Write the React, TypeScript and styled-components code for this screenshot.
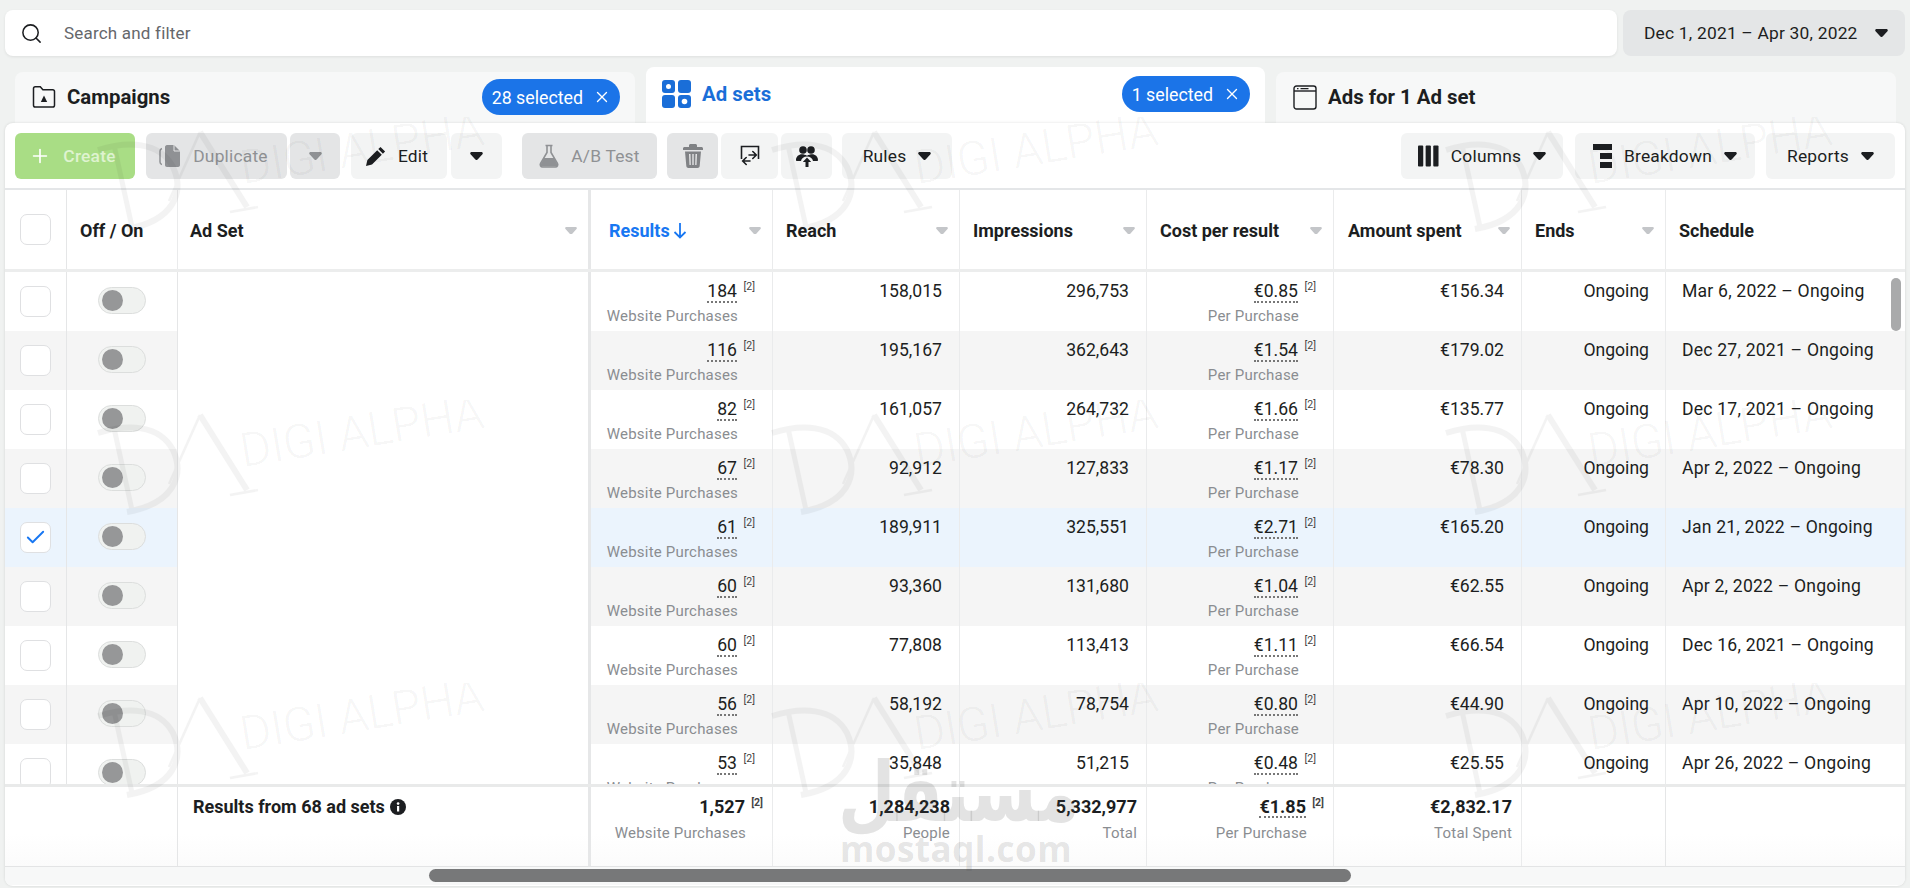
import * as React from "react";
import styled, { createGlobalStyle } from "styled-components";
import { Search, X, Plus, Check } from "lucide-react";

const GRID = "62px 111px 413px 182px 187px 187px 187px 188px 144px 240px";

const rows = [
  ["184", "158,015", "296,753", "€0.85", "€156.34", "Mar 6, 2022 – Ongoing"],
  ["116", "195,167", "362,643", "€1.54", "€179.02", "Dec 27, 2021 – Ongoing"],
  ["82", "161,057", "264,732", "€1.66", "€135.77", "Dec 17, 2021 – Ongoing"],
  ["67", "92,912", "127,833", "€1.17", "€78.30", "Apr 2, 2022 – Ongoing"],
  ["61", "189,911", "325,551", "€2.71", "€165.20", "Jan 21, 2022 – Ongoing"],
  ["60", "93,360", "131,680", "€1.04", "€62.55", "Apr 2, 2022 – Ongoing"],
  ["60", "77,808", "113,413", "€1.11", "€66.54", "Dec 16, 2021 – Ongoing"],
  ["56", "58,192", "78,754", "€0.80", "€44.90", "Apr 10, 2022 – Ongoing"],
  ["53", "35,848", "51,215", "€0.48", "€25.55", "Apr 26, 2022 – Ongoing"],
];

const Global = createGlobalStyle`
  html, body { margin: 0; padding: 0; background: #f0f2f1; }
  body { font-family: Roboto, "Liberation Sans", sans-serif; color: #1c1e21; }
  * { box-sizing: border-box; }
`;

const Page = styled.div`
  position: relative;
  width: 1910px;
  height: 888px;
  padding: 10px 5px 2px 5px;
  overflow: hidden;
  background: #f0f2f1;
`;

const TopBar = styled.div`
  display: flex;
  gap: 6px;
  height: 46px;
`;

const SearchBox = styled.div`
  flex: 1;
  display: flex;
  align-items: center;
  gap: 21px;
  padding-left: 15px;
  background: #fff;
  border-radius: 8px;
  box-shadow: 0 1px 3px rgba(0, 0, 0, 0.08);
  font-size: 17px;
  letter-spacing: 0.2px;
  color: #65676b;
`;

const DateButton = styled.div`
  width: 282px;
  display: flex;
  align-items: center;
  justify-content: space-between;
  padding: 0 17px 0 21px;
  background: #e4e6e7;
  border-radius: 8px;
  font-size: 17.4px;
  letter-spacing: 0.2px;
`;

const TabRow = styled.div`
  display: flex;
  gap: 11px;
  height: 56px;
  margin-top: 11px;
  padding-left: 10px;
`;

const Tab = styled.div<{ $active?: boolean }>`
  width: ${(p) => (p.$active ? 619 : 620)}px;
  height: ${(p) => (p.$active ? 56 : 51)}px;
  margin-top: ${(p) => (p.$active ? 0 : 5)}px;
  display: flex;
  align-items: flex-start;
  padding: ${(p) => (p.$active ? "9px 15px 0 16px" : "7px 15px 0 17px")};
  background: ${(p) => (p.$active ? "#fff" : "#f7f8f8")};
  border-radius: 8px 8px 0 0;
`;

const TabLabel = styled.div<{ $active?: boolean }>`
  flex: 1;
  height: 36px;
  display: flex;
  align-items: center;
  gap: 11px;
  font-size: 20.4px;
  font-weight: 700;
  color: ${(p) => (p.$active ? "#1a6ed8" : "#1c1e21")};
`;

const Chip = styled.div`
  height: 36px;
  display: flex;
  align-items: center;
  gap: 10px;
  padding: 0 9px 0 10px;
  border-radius: 18px;
  background: #1b74e8;
  color: #fff;
  font-size: 17.8px;
`;

const Panel = styled.div`
  position: relative;
  height: 763px;
  background: #fff;
  border-radius: 8px;
  box-shadow: 0 0 3px rgba(0, 0, 0, 0.12);
  overflow: hidden;
`;

const Toolbar = styled.div`
  display: flex;
  height: 67px;
  padding: 10px 10px 0;
  border-bottom: 2px solid #e4e6e8;
`;

const Tool = styled.div<{ $w: number; $gap?: number; $tone?: "green" | "off" | "soft"; $nudge?: number }>`
  width: ${(p) => p.$w}px;
  height: 46px;
  margin-right: ${(p) => p.$gap ?? 3}px;
  padding-right: ${(p) => p.$nudge ?? 0}px;
  display: flex;
  align-items: center;
  justify-content: center;
  gap: 12px;
  font-size: 17.4px;
  letter-spacing: 0.2px;
  border-radius: 6px;
  background: ${(p) => (p.$tone === "green" ? "#a9dd85" : p.$tone === "off" ? "#e4e5e6" : "#f3f4f4")};
  color: ${(p) => (p.$tone === "green" ? "#dff3d0" : p.$tone === "off" ? "#8f9194" : "#1c1e21")};
  font-weight: ${(p) => (p.$tone === "green" ? 500 : 400)};
`;

const ToolSpacer = styled.div`
  flex: 1;
`;

const TableRow = styled.div<{ $tint?: string }>`
  display: grid;
  grid-template-columns: ${GRID};
  background: ${(p) => p.$tint ?? "#fff"};
`;

const HeadRow = styled(TableRow)`
  height: 82px;
  border-bottom: 3px solid #eceded;
`;

const HeadCell = styled.div<{ $pad?: number; $blue?: boolean; $strong?: boolean }>`
  display: flex;
  align-items: center;
  gap: 3px;
  padding-left: ${(p) => p.$pad ?? 13}px;
  padding-top: 2px;
  font-size: 18px;
  font-weight: 700;
  color: ${(p) => (p.$blue ? "#1877f2" : "#1c1e21")};
  border-right: ${(p) => (p.$strong ? "3px solid #e6e7e8" : "1px solid #eaebec")};
`;

const HeadCaret = styled.span<{ $end?: number }>`
  margin-left: auto;
  margin-right: ${(p) => p.$end ?? 11}px;
  display: flex;
`;

const Body = styled.div`
  height: 512px;
  overflow: hidden;
`;

const DataRow = styled(TableRow)`
  height: 59px;
`;

const BoxCell = styled.div`
  display: flex;
  align-items: center;
  justify-content: center;
  border-right: 1px solid #e5e6e7;
`;

const NameCell = styled.div`
  background: #fff;
  border-right: 3px solid #e6e7e8;
`;

const NumCell = styled.div<{ $pad?: number }>`
  padding: 7px ${(p) => p.$pad ?? 17}px 0 0;
  text-align: right;
  border-right: 1px solid #eaebec;
  font-size: 17.6px;
  line-height: 24px;
  white-space: nowrap;
`;

const TextCell = styled(NumCell)`
  padding-left: 16px;
  text-align: left;
  letter-spacing: 0.2px;
`;

const Metric = styled.span`
  border-bottom: 2px dotted #777;
  line-height: 19px;
  display: inline-block;
`;

const Sup = styled.sup`
  display: inline-block;
  width: 18px;
  font-size: 10.5px;
  line-height: 10px;
  text-align: right;
  vertical-align: 7px;
  color: #444;
`;

const SubLabel = styled.div<{ $pad?: number }>`
  margin-top: 3px;
  padding-right: ${(p) => p.$pad ?? 17}px;
  font-size: 15px;
  line-height: 20px;
  letter-spacing: 0.2px;
  color: #8a8d91;
`;

const CheckBox = styled.div`
  width: 31px;
  height: 31px;
  display: flex;
  align-items: center;
  justify-content: center;
  background: #fff;
  border: 1px solid #dfe0e2;
  border-radius: 7px;
`;

const Toggle = styled.div`
  width: 48px;
  height: 27px;
  margin-bottom: 2px;
  padding: 2px 0 0 3px;
  background: #f0f2f0;
  border: 1px solid #dcdedd;
  border-radius: 14px;
`;

const Knob = styled.div`
  width: 21px;
  height: 21px;
  border-radius: 50%;
  background: #969798;
`;

const FootRow = styled(TableRow)`
  height: 82px;
  border-top: 3px solid #e9eaea;
  background: linear-gradient(#fff 60%, #fbfbfb);
`;

const FootLead = styled.div`
  grid-column: span 2;
  border-right: 1px solid #e5e6e7;
`;

const FootBlank = styled.div`
  border-right: 1px solid #e5e6e7;
`;

const FootName = styled.div`
  display: flex;
  gap: 5px;
  padding: 8px 0 0 15px;
  font-size: 18px;
  line-height: 24px;
  font-weight: 700;
  border-right: 3px solid #e6e7e8;
`;

const FootNum = styled(NumCell)`
  padding-top: 8px;
  font-size: 18px;
  font-weight: 700;
`;

const FootSub = styled(SubLabel)`
  margin-top: 4px;
  font-weight: 400;
  font-size: 15px;
`;

const ScrollTrack = styled.div`
  height: 19px;
  padding: 2px 0 0 424px;
  border-top: 1px solid #e3e4e5;
  background: #f7f8f8;
`;

const ScrollThumb = styled.div`
  width: 922px;
  height: 13px;
  border-radius: 7px;
  background: #777879;
`;

const VScroll = styled.div`
  position: absolute;
  left: 1886px;
  top: 155px;
  width: 10px;
  height: 53px;
  border-radius: 5px;
  background: #a9aaab;
`;

const Marks = styled.div`
  position: absolute;
  inset: 0;
  display: grid;
  grid-template-columns: repeat(3, 674px);
  grid-auto-rows: 283px;
  padding: 117px 0 0 97px;
  pointer-events: none;
`;

const Brand = styled.div`
  position: absolute;
  left: 838px;
  top: 752px;
  width: 236px;
  text-align: center;
  color: rgba(70, 70, 70, 0.15);
  pointer-events: none;
  font-weight: 700;
`;

const BrandAr = styled.div`
  font-family: "DejaVu Sans", sans-serif;
  font-size: 66px;
  line-height: 82px;
  white-space: nowrap;
  transform: scaleY(1.25);
`;

const BrandEn = styled.div`
  font-family: "Open Sans", Roboto, sans-serif;
  font-size: 35px;
  line-height: 30px;
  letter-spacing: 0.5px;
`;

const Caret = ({ color = "#1c1e21", w = 13 }: { color?: string; w?: number }) => (
  <svg width={w} height={w * 0.62} viewBox="0 0 16 10">
    <path d="M2 0h12c1.6 0 2.4 1.6 1.4 2.8L9.4 9.3c-.8.9-2 .9-2.8 0L.6 2.8C-.4 1.6.4 0 2 0z" fill={color} />
  </svg>
);

const CampaignIcon = () => (
  <svg width="24" height="24" viewBox="0 0 24 24" fill="none" stroke="#1c1e21" strokeWidth="1.5">
    <path d="M1.5 3.5c0-1 .8-1.8 1.8-1.8h5l2.6 3h9.8c1 0 1.8.8 1.8 1.8v13.7c0 1-.8 1.8-1.8 1.800H3.300c-1 0-1.800-.8-1.800-1.800z" />
    <path d="M12 10.500l3.200 6.500H8.800z" fill="#1c1e21" stroke="none" />
  </svg>
);

const AdSetIcon = () => (
  <svg width="29" height="28" viewBox="0 0 29 28">
    <g fill="#1a6ed8">
      <rect x="0" y="0" width="13" height="13" rx="3" />
      <rect x="16" y="0" width="13" height="13" rx="3" />
      <rect x="0" y="15" width="13" height="13" rx="3" />
      <rect x="16" y="15" width="13" height="13" rx="3" />
    </g>
    <circle cx="6.500" cy="6.500" r="2.500" fill="#fff" />
    <circle cx="22.500" cy="21.500" r="2.800" fill="#fff" />
  </svg>
);

const WindowIcon = () => (
  <svg width="24" height="25" viewBox="0 0 24 25" fill="none" stroke="#1c1e21" strokeWidth="1.4">
    <rect x="1" y="1" width="22" height="23" rx="2.500" />
    <path d="M1 6h22" />
    <path d="M4 3.600h1.500M7.500 3.600h8" strokeWidth="1.200" />
  </svg>
);

const CopyIcon = () => (
  <svg width="22" height="24" viewBox="0 0 22 24" fill="#8f9194">
    <path d="M8 1h7l6 6v14c0 1-.8 2-2 2H8c-1.200 0-2-1-2-2V3c0-1 .8-2 2-2z" />
    <path d="M3 4.500C1.500 5 1 6 1 7v11c0 1.200.5 2.200 2 2.500" fill="none" stroke="#8f9194" strokeWidth="1.500" />
    <path d="M15 1v6h6" fill="none" stroke="#e4e5e6" strokeWidth="1" />
  </svg>
);

const PencilIcon = () => (
  <svg width="20" height="20" viewBox="0 0 20 20" fill="#1c1e21">
    <path d="M14.500.9l4.600 4.600-2.200 2.200-4.600-4.600zM11.200 4.200l4.600 4.600L6 18.600 0 20l1.400-6z" />
  </svg>
);

const FlaskIcon = () => (
  <svg width="20" height="24" viewBox="0 0 20 24" fill="none">
    <path d="M6.500 1.500h7M8 1.500v7L1.600 19.400C.7 21 1.700 23 3.600 23h12.800c1.900 0 2.900-2 2-3.600L12 8.500v-7" stroke="#8f9194" strokeWidth="1.600" />
    <path d="M4.800 14h10.400l3 6c.6 1.400-.2 2.600-1.600 2.600H3.400c-1.400 0-2.200-1.200-1.600-2.600z" fill="#8f9194" />
  </svg>
);

const TrashIcon = () => (
  <svg width="20" height="24" viewBox="0 0 20 24" fill="#808285">
    <path d="M7.500 0h5c.8 0 1.500.7 1.500 1.500V3h4.500c.8 0 1.500.7 1.500 1.500V6H0V4.500C0 3.700.7 3 1.500 3H6V1.500C6 .7 6.700 0 7.500 0z" />
    <path d="M2 7.500h16L16.700 22c-.1 1.100-1 2-2.200 2H5.500c-1.200 0-2.100-.9-2.200-2zM6 10l.5 11h1.300l-.3-11zM9.300 10v11h1.400V10zm3.200 0l-.3 11h1.300l.5-11z" fillRule="evenodd" />
  </svg>
);

const SwapIcon = () => (
  <svg width="22" height="22" viewBox="0 0 22 22" fill="none" stroke="#1c1e21" strokeWidth="1.600">
    <path d="M2.500 14V1.500h17V14" />
    <path d="M12 9h7m-3.200-3.500L19.300 9l-3.500 3.500" transform="translate(-2 1)" strokeLinecap="round" />
    <path d="M11 16H4m3.200-3.500L3.700 16l3.500 3.500" strokeLinecap="round" />
  </svg>
);

const PeopleIcon = () => (
  <svg width="22" height="21" viewBox="0 0 22 21" fill="#1c1e21">
    <circle cx="7" cy="4" r="3.800" />
    <circle cx="15" cy="4" r="3.800" />
    <path d="M0 14c0-3.500 2.800-5.800 6-5.800 1.600 0 3.200.5 5 1.500 1.800-1 3.400-1.500 5-1.500 3.200 0 6 2.300 6 5.800 0 .6-.4 1-1 1h-4c-.6-2.800-3-4.500-6-4.500s-5.400 1.700-6 4.500H1c-.6 0-1-.4-1-1z" />
    <path d="M11 11.500l4.200 4.500h-2.700v5h-3v-5H6.800z" />
  </svg>
);

const ColumnsIcon = () => (
  <svg width="21" height="22" viewBox="0 0 22 22" fill="#1c1e21">
    <rect x="0" y="0" width="5.500" height="22" rx="1" />
    <rect x="8" y="0" width="5.500" height="22" rx="1" />
    <rect x="16" y="0" width="5.500" height="22" rx="1" />
  </svg>
);

const BreakdownIcon = () => (
  <svg width="19" height="24" viewBox="0 0 19 24" fill="#1c1e21">
    <rect x="0" y="0" width="19" height="6" />
    <rect x="7" y="9" width="12" height="6" />
    <rect x="7" y="18" width="12" height="6" />
  </svg>
);

const InfoIcon = () => (
  <svg width="16" height="16" viewBox="0 0 16 16" style={{ marginTop: 4 }}>
    <circle cx="8" cy="8" r="8" fill="#1c1e21" />
    <rect x="7" y="7" width="2.200" height="5.500" fill="#fff" />
    <circle cx="8.100" cy="4.600" r="1.300" fill="#fff" />
  </svg>
);

const SortArrow = () => (
  <svg width="14" height="17" viewBox="0 0 14 17" fill="none" stroke="#1877f2" strokeWidth="1.800">
    <path d="M7 1v14M1.500 10L7 15.500 12.500 10" />
  </svg>
);

const Mark = () => (
  <svg width="420" height="170" viewBox="0 0 420 170" fill="none">
    <g opacity="0.042" stroke="#000">
      <path d="M1 33C30 24 62 24 76 50c12 26 0 54-46 62" strokeWidth="6" />
      <path d="M17 28l18 82" strokeWidth="5" />
      <path d="M72 84l31-69" strokeWidth="2.500" />
      <path d="M103 15l47 75" strokeWidth="6" />
      <path d="M133 95l28-5" strokeWidth="2.500" />
    </g>
    <text
      x="146"
      y="67"
      transform="rotate(-9.300 146 67)"
      fill="rgba(0,0,0,0.05)"
      fontFamily="Roboto, sans-serif"
      fontWeight="300"
      fontSize="47"
    >
      DIGI ALPHA
    </text>
  </svg>
);

const heads: [string, number][] = [
  ["Reach", 13],
  ["Impressions", 13],
  ["Cost per result", 13],
  ["Amount spent", 14],
  ["Ends", 13],
];

const SoftCaret = () => <Caret color="#c4c6c9" w={12} />;

export default function App() {
  return (
    <Page>
      <Global />
      <TopBar>
        <SearchBox>
          <Search size={23} strokeWidth={1.6} color="#1c1e21" />
          Search and filter
        </SearchBox>
        <DateButton>
          Dec 1, 2021 – Apr 30, 2022
          <Caret />
        </DateButton>
      </TopBar>

      <TabRow>
        <Tab>
          <TabLabel>
            <CampaignIcon />
            Campaigns
          </TabLabel>
          <Chip>
            28 selected
            <X size={18} strokeWidth={1.8} />
          </Chip>
        </Tab>
        <Tab $active>
          <TabLabel $active>
            <AdSetIcon />
            Ad sets
          </TabLabel>
          <Chip>
            1 selected
            <X size={18} strokeWidth={1.8} />
          </Chip>
        </Tab>
        <Tab>
          <TabLabel>
            <WindowIcon />
            Ads for 1 Ad set
          </TabLabel>
        </Tab>
      </TabRow>

      <Panel>
        <Toolbar>
          <Tool $w={120} $gap={11} $tone="green" $nudge={5}>
            <Plus size={22} strokeWidth={1.8} color="#fff" />
            Create
          </Tool>
          <Tool $w={141} $tone="off" $nudge={6}>
            <CopyIcon />
            Duplicate
          </Tool>
          <Tool $w={50} $gap={11} $tone="off">
            <Caret color="#8f9194" />
          </Tool>
          <Tool $w={96} $gap={4} $nudge={4}>
            <PencilIcon />
            Edit
          </Tool>
          <Tool $w={51} $gap={20}>
            <Caret />
          </Tool>
          <Tool $w={135} $gap={10} $tone="off">
            <FlaskIcon />
            A/B Test
          </Tool>
          <Tool $w={51} $tone="off">
            <TrashIcon />
          </Tool>
          <Tool $w={57}>
            <SwapIcon />
          </Tool>
          <Tool $w={51} $gap={10}>
            <PeopleIcon />
          </Tool>
          <Tool $w={110} $gap={0}>
            Rules
            <Caret />
          </Tool>
          <ToolSpacer />
          <Tool $w={162} $gap={12}>
            <ColumnsIcon />
            Columns
            <Caret />
          </Tool>
          <Tool $w={180} $gap={11}>
            <BreakdownIcon />
            Breakdown
            <Caret />
          </Tool>
          <Tool $w={129} $gap={0}>
            Reports
            <Caret />
          </Tool>
        </Toolbar>

        <HeadRow>
          <BoxCell>
            <CheckBox />
          </BoxCell>
          <HeadCell>Off / On</HeadCell>
          <HeadCell $strong $pad={12}>
            Ad Set
            <HeadCaret $end={11}>
              <SoftCaret />
            </HeadCaret>
          </HeadCell>
          <HeadCell $pad={18} $blue>
            Results
            <SortArrow />
            <HeadCaret>
              <SoftCaret />
            </HeadCaret>
          </HeadCell>
          {heads.map(([label, pad]) => (
            <HeadCell key={label} $pad={pad}>
              {label}
              <HeadCaret>
                <SoftCaret />
              </HeadCaret>
            </HeadCell>
          ))}
          <HeadCell>Schedule</HeadCell>
        </HeadRow>

        <Body>
          {rows.map((r, i) => (
            <DataRow key={i} $tint={i === 4 ? "#ebf4fd" : i % 2 ? "#f5f5f5" : "#fff"}>
              <BoxCell>
                <CheckBox>{i === 4 && <Check size={23} strokeWidth={2} color="#1877f2" />}</CheckBox>
              </BoxCell>
              <BoxCell>
                <Toggle>
                  <Knob />
                </Toggle>
              </BoxCell>
              <NameCell />
              <NumCell>
                <Metric>{r[0]}</Metric>
                <Sup>[2]</Sup>
                <SubLabel>Website Purchases</SubLabel>
              </NumCell>
              <NumCell>{r[1]}</NumCell>
              <NumCell>{r[2]}</NumCell>
              <NumCell>
                <Metric>{r[3]}</Metric>
                <Sup>[2]</Sup>
                <SubLabel>Per Purchase</SubLabel>
              </NumCell>
              <NumCell>{r[4]}</NumCell>
              <NumCell $pad={16}>Ongoing</NumCell>
              <TextCell>{r[5]}</TextCell>
            </DataRow>
          ))}
        </Body>

        <FootRow>
          <FootLead />
          <FootName>
            Results from 68 ad sets
            <InfoIcon />
          </FootName>
          <FootNum $pad={9}>
            1,527
            <Sup>[2]</Sup>
            <FootSub>Website Purchases</FootSub>
          </FootNum>
          <FootNum $pad={9}>
            1,284,238
            <FootSub $pad={0}>People</FootSub>
          </FootNum>
          <FootNum $pad={9}>
            5,332,977
            <FootSub $pad={0}>Total</FootSub>
          </FootNum>
          <FootNum $pad={9}>
            <Metric>€1.85</Metric>
            <Sup>[2]</Sup>
            <FootSub>Per Purchase</FootSub>
          </FootNum>
          <FootNum $pad={9}>
            €2,832.17
            <FootSub $pad={0}>Total Spent</FootSub>
          </FootNum>
          <FootBlank />
          <div />
        </FootRow>

        <ScrollTrack>
          <ScrollThumb />
        </ScrollTrack>
        <VScroll />
      </Panel>

      <Marks>
        {Array.from({ length: 9 }).map((_, i) => (
          <Mark key={i} />
        ))}
      </Marks>
      <Brand>
        <BrandAr>مستقل</BrandAr>
        <BrandEn>mostaql.com</BrandEn>
      </Brand>
    </Page>
  );
}
